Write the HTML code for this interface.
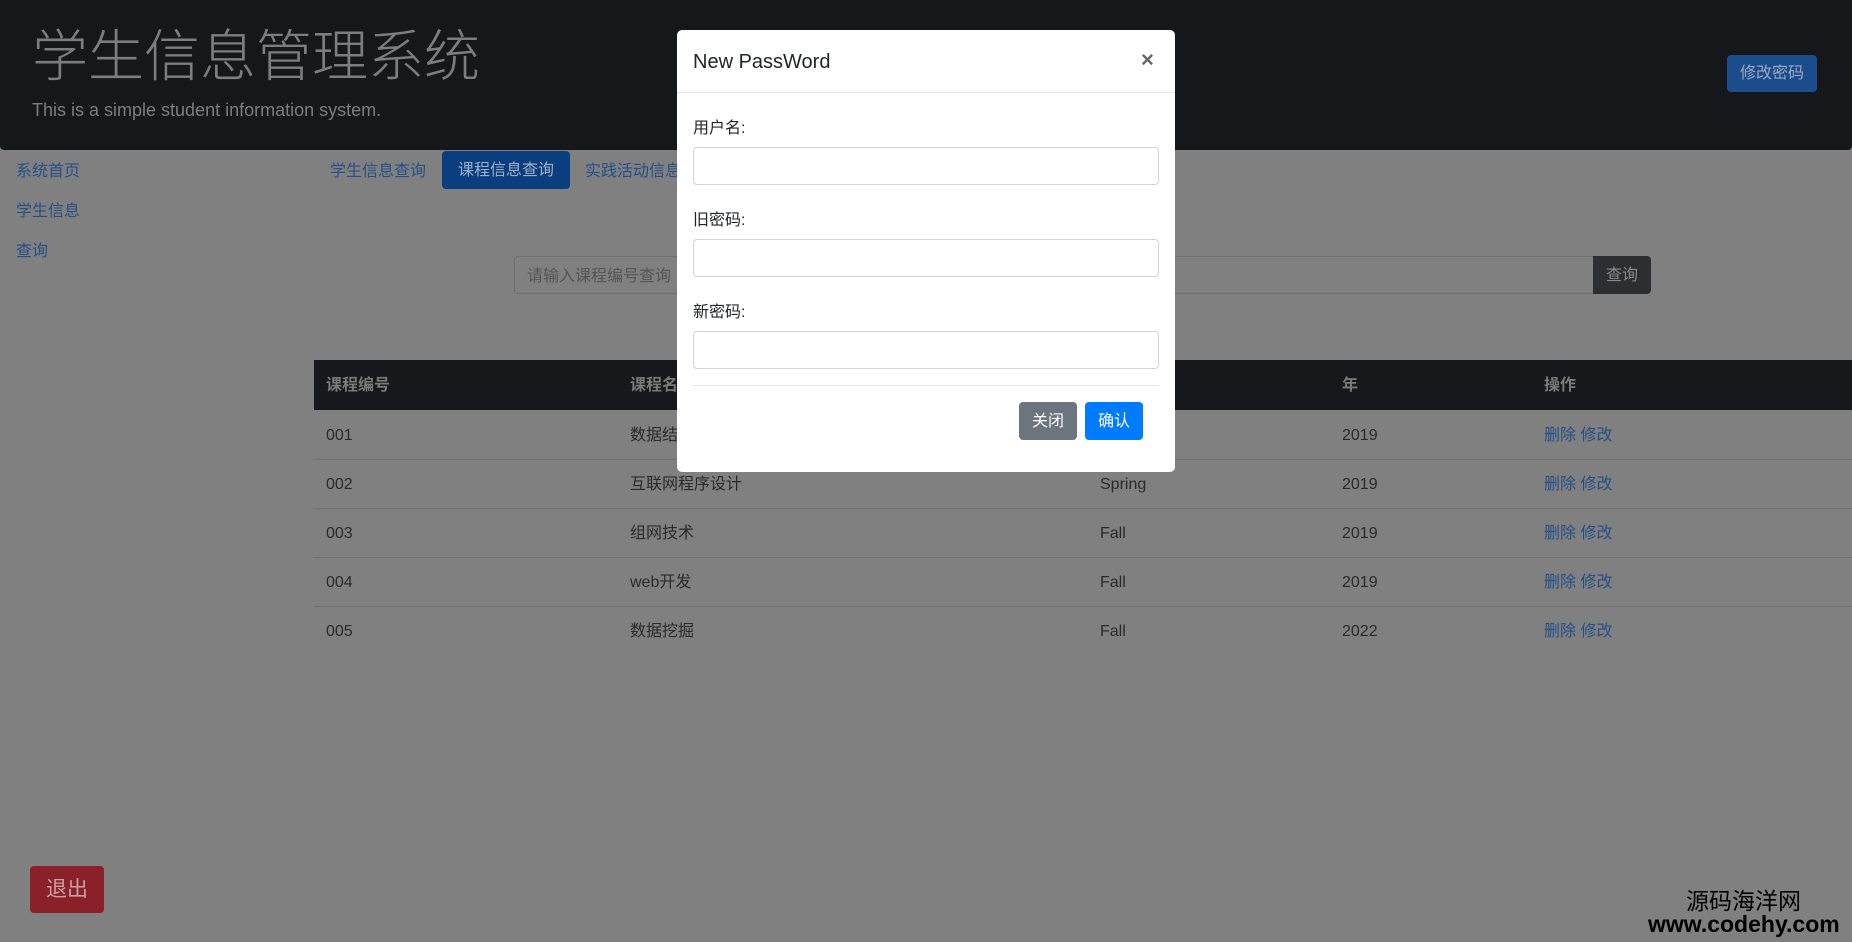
<!DOCTYPE html>
<html><head><meta charset="utf-8"><style>
*{box-sizing:border-box;margin:0;padding:0}
body{width:1852px;height:942px;overflow:hidden;background:#808080;font-family:"Liberation Sans","Noto Sans CJK SC",sans-serif;position:relative;color:#2a2a2a}
.a{position:absolute;white-space:nowrap;line-height:20px}
.hdr{left:0;top:0;width:1852px;height:150px;background:#16171b;border-radius:0 0 4px 4px}
.lnk{color:#254f88;font-size:16px}
.t{font-size:16px}
</style></head><body>
<div class="a hdr"></div>
<div class="a" style="left:32px;top:26px;font-size:56px;line-height:62px;color:#7d7d7f;font-weight:300">学生信息管理系统</div>
<div class="a" style="left:32px;top:100px;font-size:18px;color:#7d7d7f">This is a simple student information system.</div>
<div class="a" style="left:1727px;top:55px;width:90px;height:37px;background:#1b4d8c;border-radius:4px;color:#9aa9bf;font-size:16px;text-align:center;line-height:37px">修改密码</div>

<div class="a lnk" style="left:16px;top:162px">系统首页</div>
<div class="a lnk" style="left:16px;top:202px">学生信息</div>
<div class="a lnk" style="left:16px;top:242px">查询</div>

<div class="a lnk" style="left:330px;top:162px">学生信息查询</div>
<div class="a" style="left:442px;top:151px;width:128px;height:38px;background:#0a3e7f;border-radius:4px;color:#9fb0c8;font-size:16px;text-align:center;line-height:40px">课程信息查询</div>
<div class="a lnk" style="left:585px;top:162px">实践活动信息</div>

<div class="a" style="left:514px;top:256px;width:1080px;height:38px;border:1px solid #6f6f6f;border-radius:4px 0 0 4px;background:#808080;color:#555;font-size:16px;line-height:39px;padding-left:12px">请输入课程编号查询</div>
<div class="a" style="left:1593px;top:256px;width:58px;height:38px;background:#2c2e32;border-radius:0 4px 4px 0;color:#8a8a8a;font-size:16px;text-align:center;line-height:40px">查询</div>

<div class="a" style="left:314px;top:360px;width:1538px;height:50px;background:#17181b"></div>
<div class="a" style="left:326px;top:376px;color:#7a7a7a;font-size:16px;font-weight:bold">课程编号</div>
<div class="a" style="left:630px;top:376px;color:#7a7a7a;font-size:16px;font-weight:bold">课程名</div>
<div class="a" style="left:1342px;top:376px;color:#7a7a7a;font-size:16px;font-weight:bold">年</div>
<div class="a" style="left:1544px;top:376px;color:#7a7a7a;font-size:16px;font-weight:bold">操作</div>

<div class="a" style="left:314px;top:459px;width:1538px;height:1px;background:#727272"></div>
<div class="a" style="left:314px;top:508px;width:1538px;height:1px;background:#727272"></div>
<div class="a" style="left:314px;top:557px;width:1538px;height:1px;background:#727272"></div>
<div class="a" style="left:314px;top:606px;width:1538px;height:1px;background:#727272"></div>

<div class="a t" style="left:326px;top:426px">001</div><div class="a t" style="left:630px;top:426px">数据结构</div><div class="a t" style="left:1342px;top:426px">2019</div><div class="a lnk" style="left:1544px;top:426px">删除 修改</div>
<div class="a t" style="left:326px;top:475px">002</div><div class="a t" style="left:630px;top:475px">互联网程序设计</div><div class="a t" style="left:1100px;top:475px">Spring</div><div class="a t" style="left:1342px;top:475px">2019</div><div class="a lnk" style="left:1544px;top:475px">删除 修改</div>
<div class="a t" style="left:326px;top:524px">003</div><div class="a t" style="left:630px;top:524px">组网技术</div><div class="a t" style="left:1100px;top:524px">Fall</div><div class="a t" style="left:1342px;top:524px">2019</div><div class="a lnk" style="left:1544px;top:524px">删除 修改</div>
<div class="a t" style="left:326px;top:573px">004</div><div class="a t" style="left:630px;top:573px">web开发</div><div class="a t" style="left:1100px;top:573px">Fall</div><div class="a t" style="left:1342px;top:573px">2019</div><div class="a lnk" style="left:1544px;top:573px">删除 修改</div>
<div class="a t" style="left:326px;top:622px">005</div><div class="a t" style="left:630px;top:622px">数据挖掘</div><div class="a t" style="left:1100px;top:622px">Fall</div><div class="a t" style="left:1342px;top:622px">2022</div><div class="a lnk" style="left:1544px;top:622px">删除 修改</div>

<div class="a" style="left:30px;top:866px;width:74px;height:47px;background:#8a2129;border-radius:4px;color:#c9a0a4;font-size:21px;text-align:center;line-height:47px">退出</div>

<div class="a" style="left:1686px;top:888px;font-size:23px;line-height:26px;color:#000">源码海洋网</div>
<div class="a" style="left:1648px;top:911px;font-size:23px;line-height:26px;font-weight:bold;color:#000">www.codehy.com</div>

<div class="a" style="left:677px;top:30px;width:498px;height:442px;background:#fff;border-radius:5px"></div>
<div class="a" style="left:693px;top:51px;font-size:20px;line-height:22px;color:#212529;font-weight:500">New PassWord</div>
<div class="a" style="left:1141px;top:50px;font-size:22px;color:#666;font-weight:bold">×</div>
<div class="a" style="left:677px;top:92px;width:498px;height:1px;background:#e5e5e5"></div>
<div class="a t" style="left:693px;top:119px;color:#212529">用户名:</div>
<div class="a" style="left:693px;top:147px;width:466px;height:38px;border:1px solid #ced4da;border-radius:4px"></div>
<div class="a t" style="left:693px;top:211px;color:#212529">旧密码:</div>
<div class="a" style="left:693px;top:239px;width:466px;height:38px;border:1px solid #ced4da;border-radius:4px"></div>
<div class="a t" style="left:693px;top:303px;color:#212529">新密码:</div>
<div class="a" style="left:693px;top:331px;width:466px;height:38px;border:1px solid #ced4da;border-radius:4px"></div>
<div class="a" style="left:693px;top:385px;width:466px;height:1px;background:#e5e5e5"></div>
<div class="a" style="left:1019px;top:402px;width:58px;height:38px;background:#6c757d;border-radius:4px;color:#fff;font-size:16px;text-align:center;line-height:40px">关闭</div>
<div class="a" style="left:1085px;top:402px;width:58px;height:38px;background:#007bff;border-radius:4px;color:#fff;font-size:16px;text-align:center;line-height:40px">确认</div>
</body></html>
